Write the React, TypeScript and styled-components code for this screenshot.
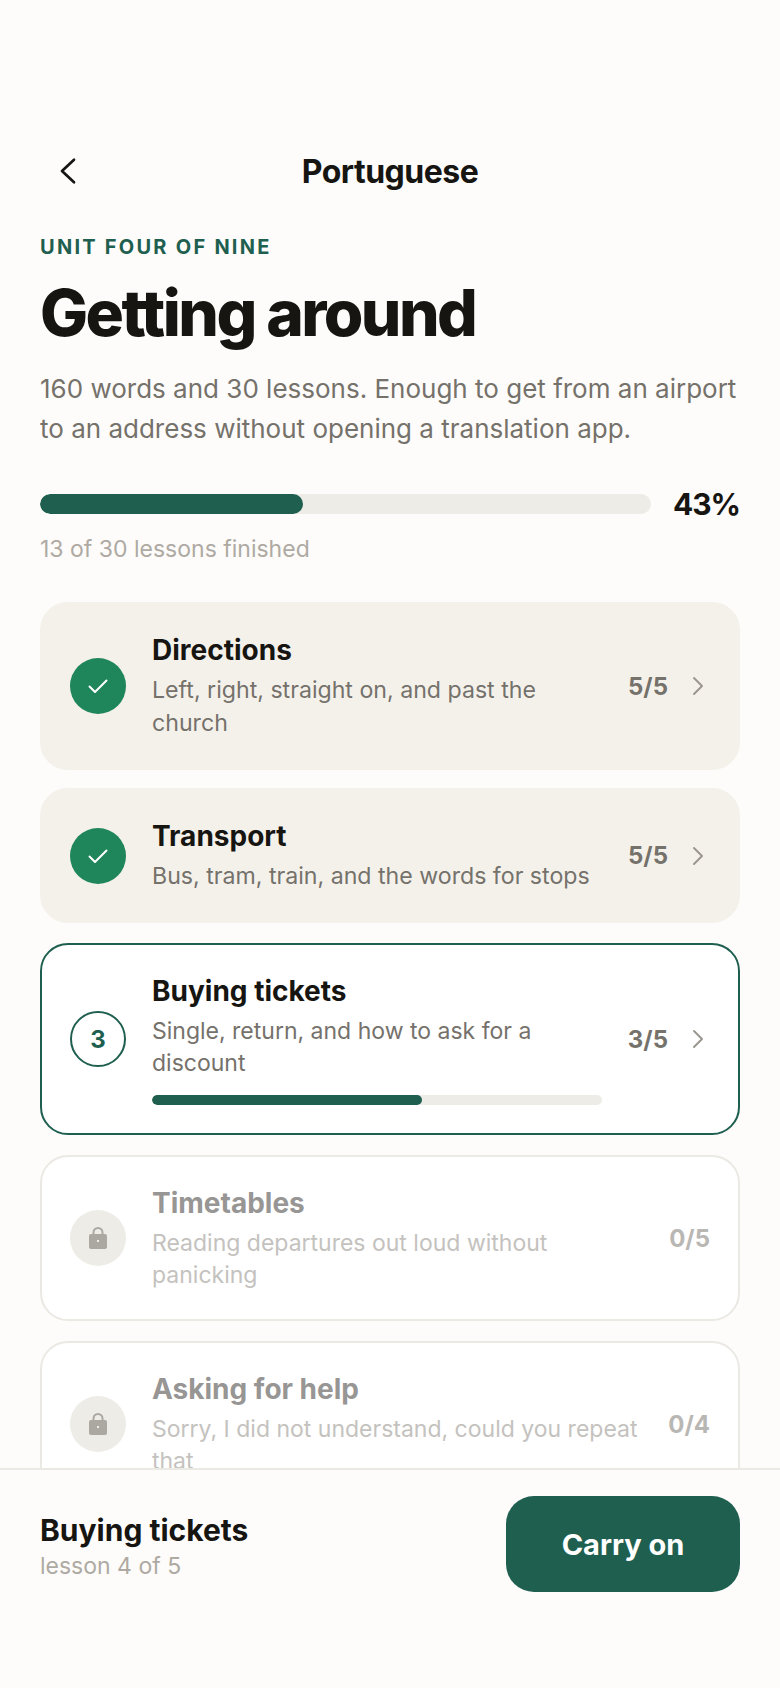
import React from 'react'
import styled, { createGlobalStyle } from 'styled-components'

const GlobalStyle = createGlobalStyle`
  html, body {
    margin: 0;
    padding: 0;
    background: #fdfcfa;
  }
  * {
    box-sizing: border-box;
  }
`

type Status = 'done' | 'current' | 'locked'

type Lesson = {
  title: string
  text: string
  score: string
  status: Status
  step?: number
  progress?: number
}

const lessons: Lesson[] = [
  { title: 'Directions', text: 'Left, right, straight on, and past the church', score: '5/5', status: 'done' },
  { title: 'Transport', text: 'Bus, tram, train, and the words for stops', score: '5/5', status: 'done' },
  { title: 'Buying tickets', text: 'Single, return, and how to ask for a discount', score: '3/5', status: 'current', step: 3, progress: 60 },
  { title: 'Timetables', text: 'Reading departures out loud without panicking', score: '0/5', status: 'locked' },
  { title: 'Asking for help', text: 'Sorry, I did not understand, could you repeat that', score: '0/4', status: 'locked' },
]

const BackIcon = () => (
  <svg width="36" height="36" viewBox="0 0 24 24" fill="none" stroke="currentColor" strokeWidth={1.8} strokeLinecap="round" strokeLinejoin="round">
    <path d="M16 4.5L8 12l8 7.5" />
  </svg>
)

const RowChevron = () => (
  <svg width="24" height="24" viewBox="0 0 24 24" fill="none" stroke="currentColor" strokeWidth={1.9} strokeLinecap="round" strokeLinejoin="round">
    <path d="M8 4l8 8-8 8" />
  </svg>
)

const Check = () => (
  <svg width="24" height="24" viewBox="0 0 24 24" fill="none" stroke="#fff" strokeWidth={2} strokeLinecap="round" strokeLinejoin="round">
    <path d="M3.5 12.5l5.5 5.5L20.5 6.5" />
  </svg>
)

const Lock = () => (
  <svg width="20" height="24" viewBox="0 0 20 24">
    <path d="M5.5 9V6.5a4.5 4.5 0 0 1 9 0V9" fill="none" stroke="#aba8a2" strokeWidth="2" />
    <rect x="1" y="8" width="18" height="15" rx="2" fill="#aba8a2" />
    <rect x="9" y="14" width="2" height="2" fill="#eeece6" />
  </svg>
)

function LessonRow({ lesson }: { lesson: Lesson }) {
  const { title, text, score, status, step, progress } = lesson

  return (
    <Card $status={status}>
      <Badge $status={status}>
        {status === 'done' && <Check />}
        {status === 'current' && step}
        {status === 'locked' && <Lock />}
      </Badge>
      <Body>
        <Title $status={status}>{title}</Title>
        <Desc $status={status}>{text}</Desc>
        {progress !== undefined && (
          <MiniTrack>
            <Fill style={{ width: `${progress}%` }} />
          </MiniTrack>
        )}
      </Body>
      <Score $status={status}>{score}</Score>
      {status !== 'locked' && (
        <RowArrow>
          <RowChevron />
        </RowArrow>
      )}
    </Card>
  )
}

export default function App() {
  return (
    <Page>
      <GlobalStyle />
      <Main>
        <Header>
          <BackButton>
            <BackIcon />
          </BackButton>
          <HeaderTitle>Portuguese</HeaderTitle>
        </Header>
        <Eyebrow>UNIT FOUR OF NINE</Eyebrow>
        <Heading>Getting around</Heading>
        <Intro>160 words and 30 lessons. Enough to get from an airport to an address without opening a translation app.</Intro>
        <ProgressRow>
          <Track>
            <Fill style={{ width: '43%' }} />
          </Track>
          <Percent>43%</Percent>
        </ProgressRow>
        <Finished>13 of 30 lessons finished</Finished>
        <List>
          {lessons.map((lesson) =>
            <LessonRow key={lesson.title} lesson={lesson} />
          )}
        </List>
      </Main>
      <Footer>
        <div>
          <FooterTitle>Buying tickets</FooterTitle>
          <FooterSub>lesson 4 of 5</FooterSub>
        </div>
        <CarryOn>Carry on</CarryOn>
      </Footer>
    </Page>
  )
}

const Page = styled.div`
  display: flex;
  flex-direction: column;
  width: 780px;
  height: 1688px;
  overflow: hidden;
  background: #fdfcfa;
  color: #161512;
  font-family: Inter, "Liberation Sans", sans-serif;
`

const Main = styled.main`
  flex: 1;
  min-height: 0;
  overflow: hidden;
  padding: 141px 40px 0;
`

const Header = styled.header`
  display: grid;
  grid-template-columns: 1fr auto 1fr;
  align-items: center;
  height: 60px;
`

const BackButton = styled.div`
  display: flex;
  padding-left: 10px;
  color: #161512;
`

const HeaderTitle = styled.h2`
  margin: 0;
  font-size: 32px;
  font-weight: 700;
  letter-spacing: -0.5px;
`

const Eyebrow = styled.div`
  margin-top: 32px;
  font-size: 20px;
  line-height: 28px;
  font-weight: 700;
  letter-spacing: 2.25px;
  color: #1f5f50;
`

const Heading = styled.h1`
  margin: 17px 0 0;
  font-size: 64px;
  line-height: 70px;
  font-weight: 800;
  letter-spacing: -2.56px;
  color: #161512;
`

const Intro = styled.p`
  margin: 21px 0 0;
  font-size: 26px;
  line-height: 40px;
  color: #75716b;
`

const ProgressRow = styled.div`
  display: flex;
  align-items: center;
  gap: 22px;
  margin-top: 37px;
`

const Track = styled.div`
  flex: 1;
  height: 20px;
  border-radius: 10px;
  overflow: hidden;
  background: #eeece6;
`

const Fill = styled.div`
  height: 100%;
  border-radius: inherit;
  background: #1f5f50;
`

const Percent = styled.div`
  font-size: 30px;
  line-height: 36px;
  font-weight: 700;
  letter-spacing: -1px;
`

const Finished = styled.div`
  margin-top: 11px;
  font-size: 23px;
  line-height: 32px;
  color: #aeaaa3;
`

const List = styled.div`
  display: flex;
  flex-direction: column;
  gap: 18px;
  margin-top: 37px;
`

const Card = styled.div<{ $status: Status }>`
  display: flex;
  align-items: center;
  flex-shrink: 0;
  margin-top: ${(p) => (p.$status === 'done' ? '0' : '2px')};
  padding: 28px;
  border-radius: 28px;
  border: 2px solid ${(p) => (p.$status === 'done' ? '#f4f1eb' : p.$status === 'current' ? '#1f5f50' : '#ebe9e3')};
  background: ${(p) => (p.$status === 'done' ? '#f4f1eb' : '#fff')};
`

const Badge = styled.div<{ $status: Status }>`
  display: flex;
  align-items: center;
  justify-content: center;
  flex-shrink: 0;
  width: 56px;
  height: 56px;
  margin-right: 26px;
  border-radius: 50%;
  font-size: 24px;
  font-weight: 700;
  color: #1f5f50;
  border: ${(p) => (p.$status === 'current' ? '2px solid #1f5f50' : 'none')};
  background: ${(p) => (p.$status === 'done' ? '#1f855a' : p.$status === 'locked' ? '#eeece6' : '#fff')};
`

const Body = styled.div`
  flex: 1;
  min-width: 0;
`

const Title = styled.div<{ $status: Status }>`
  font-size: 28px;
  line-height: 36px;
  font-weight: 700;
  color: ${(p) => (p.$status === 'locked' ? '#979694' : '#161512')};
`

const Desc = styled.div<{ $status: Status }>`
  margin-top: 6px;
  font-size: ${(p) => (p.$status === 'done' ? '23.15px' : '23px')};
  line-height: ${(p) => (p.$status === 'done' ? '33px' : '32px')};
  color: ${(p) => (p.$status === 'locked' ? '#c4c2be' : '#75716b')};
`

const MiniTrack = styled.div`
  height: 10px;
  margin-top: 16px;
  border-radius: 5px;
  overflow: hidden;
  background: #eeece6;
`

const Score = styled.div<{ $status: Status }>`
  flex-shrink: 0;
  margin-left: 26px;
  font-size: 24px;
  font-weight: 700;
  color: ${(p) => (p.$status === 'locked' ? '#b9b7b3' : '#75716b')};
`

const RowArrow = styled.div`
  display: flex;
  margin-left: 18px;
  color: #99958e;
`

const Footer = styled.footer`
  display: flex;
  justify-content: space-between;
  flex-shrink: 0;
  height: 220px;
  padding: 26px 40px 0;
  border-top: 2px solid #ebe9e3;
  background: #fdfcfa;
`

const FooterTitle = styled.div`
  margin-top: 16px;
  font-size: 30px;
  line-height: 36px;
  font-weight: 700;
`

const FooterSub = styled.div`
  margin-top: 2px;
  font-size: 23px;
  line-height: 32px;
  color: #aeaaa3;
`

const CarryOn = styled.button`
  width: 234px;
  height: 96px;
  border: none;
  border-radius: 28px;
  background: #1f5f50;
  color: #fff;
  font-family: inherit;
  font-size: 29px;
  font-weight: 700;
`
